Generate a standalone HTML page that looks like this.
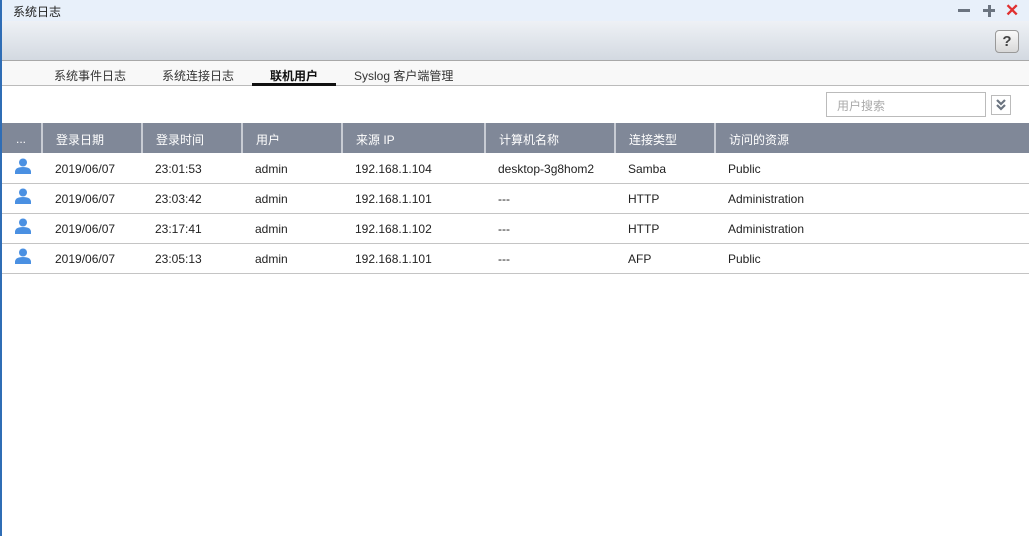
<!DOCTYPE html><html><head><meta charset="utf-8"><style>
*{margin:0;padding:0;box-sizing:border-box}
body{width:1029px;height:536px;overflow:hidden;background:#fff;font-family:"Liberation Sans","Noto Sans CJK SC",sans-serif;font-size:12px;color:#222;position:relative}
.lb{position:absolute;left:0;top:0;width:2px;height:536px;background:#2f6db5}
.tb{position:absolute;left:0;top:0;width:1029px;height:21px;background:#e8f0fa}
.tb span{position:absolute;left:13px;top:3px;font-size:12px;color:#222}
.tool{position:absolute;left:0;top:21px;width:1029px;height:40px;background:linear-gradient(#eef1f5,#d3d9e1);border-bottom:1px solid #a8a8a8}
.help{position:absolute;left:995px;top:30px;width:24px;height:23px;border:1px solid #999;border-radius:4px;background:linear-gradient(#fafafa,#d8d8d8);text-align:center;font-weight:bold;font-size:15px;line-height:21px;color:#444}
.tabs{position:absolute;left:2px;top:61px;width:1027px;height:25px;background:#f8f8f8;border-bottom:1px solid #bbb}
.tab{position:absolute;top:6px;font-size:12px;color:#333}
.ul{position:absolute;left:252px;top:83px;width:84px;height:3px;background:#111}
.search{position:absolute;left:826px;top:92px;width:160px;height:25px;border:1px solid #bbb;background:#fff;color:#aaa;padding:4px 10px;font-size:12px}
.dd{position:absolute;left:991px;top:95px;width:20px;height:20px;border:1px solid #bbb;background:#fff}
table{position:absolute;left:2px;top:123px;width:1027px;border-collapse:collapse}
th{background:#808898;color:#fff;height:30px;text-align:left;font-weight:normal;padding-left:13px;padding-top:2px;border-left:2px solid #c8ccd4;font-size:12px}
th:first-child{border-left:none}
td{height:30px;border-bottom:1px solid #c4c4c4;padding-left:13px;padding-top:2px;font-size:12px}
</style></head><body>
<div class="tb"><span>系统日志</span>
<div style="position:absolute;left:958px;top:9px;width:12px;height:3px;background:#6b7480"></div>
<div style="position:absolute;left:983px;top:9px;width:12px;height:3px;background:#6b7480"></div>
<div style="position:absolute;left:987.5px;top:4.5px;width:3px;height:12px;background:#6b7480"></div>
<div style="position:absolute;left:1005px;top:0px;color:#e03030;font-size:17px;font-weight:bold;line-height:21px">✕</div>
</div>
<div class="tool"></div>
<div class="help">?</div>
<div class="tabs">
<span class="tab" style="left:52px">系统事件日志</span>
<span class="tab" style="left:160px">系统连接日志</span>
<span class="tab" style="left:268px;font-weight:bold;color:#111">联机用户</span>
<span class="tab" style="left:352px">Syslog 客户端管理</span>
</div>
<div class="ul"></div>
<div class="search">用户搜索</div>
<div class="dd"><svg width="18" height="18" viewBox="0 0 18 18"><path d="M5 4l4 4 4-4M5 9l4 4 4-4" stroke="#6b7480" stroke-width="2.2" fill="none"/></svg></div>
<table>
<tr><th style="width:40px;padding-left:14px">...</th><th style="width:100px">登录日期</th><th style="width:100px">登录时间</th><th style="width:100px">用户</th><th style="width:143px">来源 IP</th><th style="width:130px">计算机名称</th><th style="width:100px">连接类型</th><th>访问的资源</th></tr>
<tr><td></td><td>2019/06/07</td><td>23:01:53</td><td>admin</td><td>192.168.1.104</td><td>desktop-3g8hom2</td><td>Samba</td><td>Public</td></tr>
<tr><td></td><td>2019/06/07</td><td>23:03:42</td><td>admin</td><td>192.168.1.101</td><td>---</td><td>HTTP</td><td>Administration</td></tr>
<tr><td></td><td>2019/06/07</td><td>23:17:41</td><td>admin</td><td>192.168.1.102</td><td>---</td><td>HTTP</td><td>Administration</td></tr>
<tr><td></td><td>2019/06/07</td><td>23:05:13</td><td>admin</td><td>192.168.1.101</td><td>---</td><td>AFP</td><td>Public</td></tr>
</table>
<svg style="position:absolute;left:14px;top:158px" width="18" height="110" viewBox="0 0 18 110">
<defs><g id="u"><circle cx="9" cy="4.5" r="4"/><path d="M1 16v-2q0-5 8-5t8 5v2z"/></g></defs>
<g fill="#4a90e2">
<use href="#u"/>
<use href="#u" y="30"/>
<use href="#u" y="60"/>
<use href="#u" y="90"/>
</g></svg>
<div class="lb"></div>
</body></html>
